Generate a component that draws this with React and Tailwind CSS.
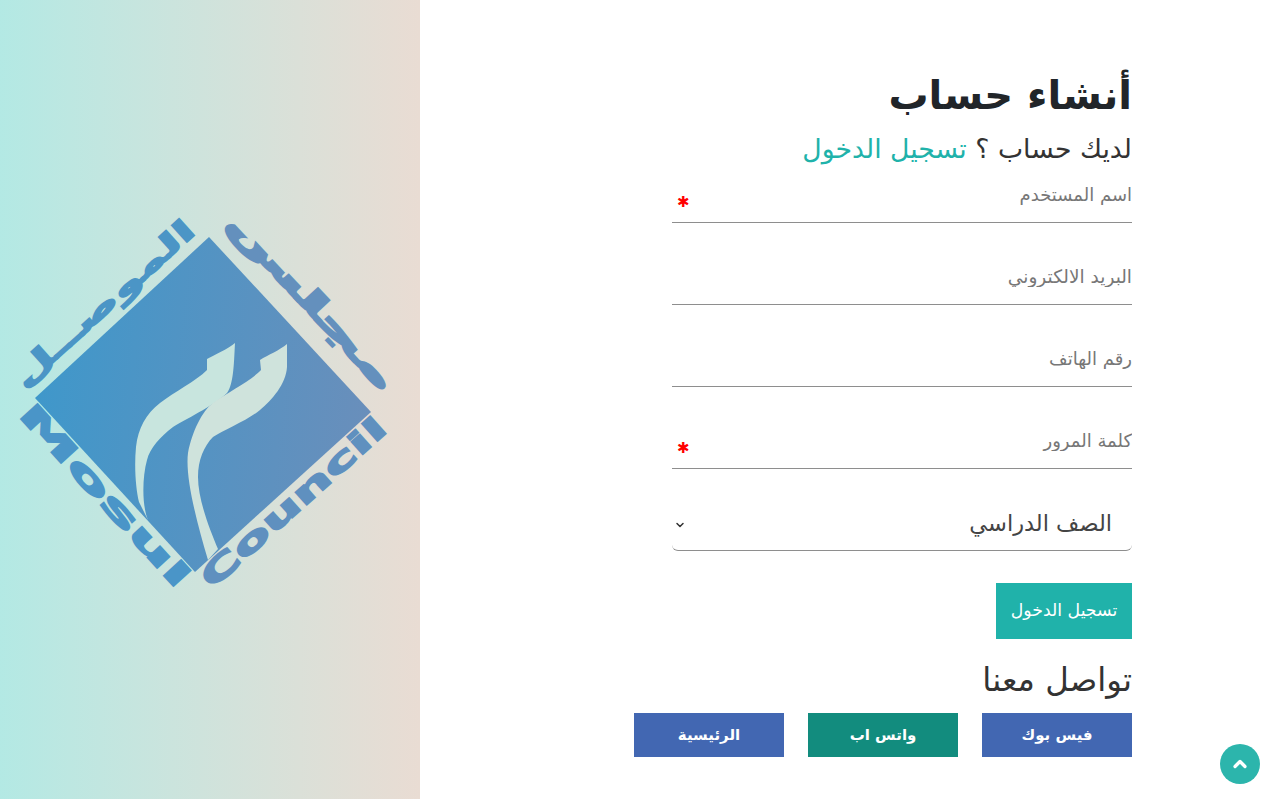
import { ChevronDown, ChevronUp } from 'lucide-react';

const FONT = 'font-["DejaVu_Sans","Noto_Sans",sans-serif]';

function Logo() {
  return (
    <svg viewBox="0 190 420 420" className="w-[420px] h-[420px] shrink-0">
      <defs>
        <linearGradient id="logoGrad" gradientUnits="userSpaceOnUse" x1="20" y1="380" x2="390" y2="420">
          <stop offset="0" stopColor="#3d98cb" />
          <stop offset="1" stopColor="#6c8eba" />
        </linearGradient>
      </defs>
      <polygon points="209,237 371,412 195,572 35,398" fill="url(#logoGrad)" />
      {/* the two swooshes are cut out in the panel colour */}
      <path
        fill="#c8e5de"
        d="M235 343 C228 349 214 355 207 359 L207 370 C196 381 174 392 160 403 C146 414 138 428 136 447 C134 468 136 490 139 502 L148 520 C142 506 142 478 147 460 C150 448 160 437 173 427 C190 417 216 404 227 393 C234 384 234 360 235 343 Z"
      />
      <path
        fill="#cfe3dc"
        d="M287 344 C280 350 268 355 260 360 L261 370 C252 380 228 392 213 403 C202 411 192 432 188 453 C185 476 196 520 208 560 L218 549 C210 530 198 500 198 477 C198 460 204 446 213 437 C224 430 248 420 260 410 C272 400 286 384 287 367 Z"
      />
      <g fontFamily="'DejaVu Sans', sans-serif" fontWeight="700" strokeWidth="1.5">
        <text
          transform="translate(17 415) rotate(47.6)"
          fontSize="31"
          textLength="237"
          lengthAdjust="spacingAndGlyphs"
          fill="#4a95c8"
          stroke="#4a95c8"
        >
          Mosul
        </text>
        <text
          transform="translate(212 590) rotate(-42)"
          fontSize="31"
          textLength="238"
          lengthAdjust="spacingAndGlyphs"
          fill="#5f90bf"
          stroke="#5f90bf"
        >
          Council
        </text>
        <text
          direction="rtl"
          transform="translate(197 233) rotate(-42)"
          fontSize="30"
          textLength="233"
          lengthAdjust="spacingAndGlyphs"
          fill="#4b95c6"
          stroke="#4b95c6"
        >
          الموصــل
        </text>
        <text
          direction="rtl"
          transform="translate(383 393) rotate(47)"
          fontSize="31"
          textLength="231"
          lengthAdjust="spacingAndGlyphs"
          fill="#6490bd"
          stroke="#6490bd"
          strokeWidth="2.5"
        >
          مجلس
        </text>
      </g>
    </svg>
  );
}

function Field({ placeholder, required, size = 'text-[18px]' }) {
  return (
    <div className="relative h-[52px] mb-[30px] border-b border-[#8e8e8e]">
      <input
        type="text"
        placeholder={placeholder}
        className={`w-full h-full pb-[4px] pr-0 ${size} text-[#555] placeholder:text-[#777] outline-none ${FONT}`}
      />
      {required && (
        <span className="absolute left-[5px] top-[22px] text-[15px] leading-[18px] font-bold text-[#f00] font-['DejaVu_Sans']">✱</span>
      )}
    </div>
  );
}

export default function App() {
  return (
    <div className={`flex h-[799px] overflow-hidden bg-white ${FONT}`}>
      <div className="w-[420px] shrink-0 flex items-center justify-center bg-gradient-to-r from-[#b3e9e4] to-[#e9dcd3]">
        <Logo />
      </div>

      <div dir="rtl" className="flex-1 pt-[64px] pr-[143px]">
        <h1 className="text-[40px] leading-[62px] font-bold text-[#212529]">أنشاء حساب</h1>
        <p className="mt-[5px] text-[26.7px] leading-[36px] text-[#333] whitespace-nowrap">
          لديك حساب ؟ <a className="text-[#20b2aa]">تسجيل الدخول</a>
        </p>

        <form className="w-[460px] mt-[4px]">
          <Field placeholder="اسم المستخدم" required />
          <Field placeholder="البريد الالكتروني" size="text-[18.5px]" />
          <Field placeholder="رقم الهاتف" />
          <Field placeholder="كلمة المرور" required />

          <div className="relative h-[52px] border-b border-[#8e8e8e] rounded-b-md">
            <select className="w-full h-full appearance-none pr-[20px] pb-[1px] text-[22.5px] text-[#444] outline-none bg-transparent">
              <option>الصف الدراسي</option>
            </select>
            <ChevronDown className="absolute left-[2px] top-[20px] w-[12px] h-[12px] text-[#333]" strokeWidth={3} />
          </div>

          <button type="button" className="block w-[136px] h-[56px] mt-[32px] bg-[#20b2aa] text-white text-[17.3px] whitespace-nowrap">
            تسجيل الدخول
          </button>
        </form>

        <h2 className="mt-[21px] text-[32.4px] leading-[40px] text-[#333]">تواصل معنا</h2>

        <div className="flex gap-[24px] mt-[13px]">
          <a className="w-[150px] h-[44px] flex items-center justify-center bg-[#4267b2] text-white text-[15px] font-bold">فيس بوك</a>
          <a className="w-[150px] h-[44px] flex items-center justify-center bg-[#128c7e] text-white text-[15px] font-bold">واتس اب</a>
          <a className="w-[150px] h-[44px] flex items-center justify-center bg-[#4267b2] text-white text-[15px] font-bold">الرئيسية</a>
        </div>
      </div>

      <button type="button" className="fixed right-[15px] bottom-[15px] w-[40px] h-[40px] rounded-full bg-[#2cb5ac] flex items-center justify-center text-white">
        <ChevronUp className="w-[20px] h-[20px]" strokeWidth={4} />
      </button>
    </div>
  );
}
